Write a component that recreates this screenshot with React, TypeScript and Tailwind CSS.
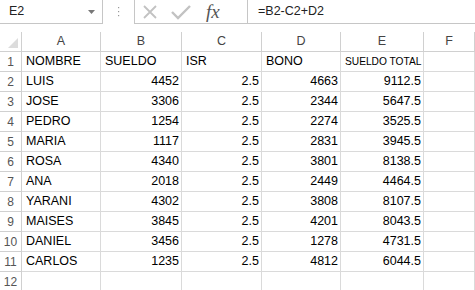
import React from "react";

const rows: [string, string, string, string, string][] = [
  ["LUIS", "4452", "2.5", "4663", "9112.5"],
  ["JOSE", "3306", "2.5", "2344", "5647.5"],
  ["PEDRO", "1254", "2.5", "2274", "3525.5"],
  ["MARIA", "1117", "2.5", "2831", "3945.5"],
  ["ROSA", "4340", "2.5", "3801", "8138.5"],
  ["ANA", "2018", "2.5", "2449", "4464.5"],
  ["YARANI", "4302", "2.5", "3808", "8107.5"],
  ["MAISES", "3845", "2.5", "4201", "8043.5"],
  ["DANIEL", "3456", "2.5", "1278", "4731.5"],
  ["CARLOS", "1235", "2.5", "4812", "6044.5"],
];

const cell = "h-[20px] border-r border-b border-[#dadada] flex items-center overflow-hidden whitespace-nowrap";
const hdr = "h-[20px] border-r border-b border-[#d0d0d0] flex items-center justify-center text-[#444] text-[12.5px]";
const rowHdr = "h-[20px] border-r border-b border-[#d0d0d0] flex items-center justify-center text-[#555] text-[12px]";

export default function App() {
  return (
    <div
      className="w-[475px] h-[290px] bg-white overflow-hidden text-[12.5px] text-black"
      style={{ fontFamily: '"Liberation Sans", Arial, sans-serif' }}
    >
      {/* formula bar */}
      <div className="h-[24px] flex">
        <div className="w-[103px] h-[24px] border-r border-b border-[#c6c6c6] flex items-center justify-between pl-[9px] pr-[7px]">
          <span className="text-[12.5px] text-[#222]">E2</span>
          <svg width="7" height="4" viewBox="0 0 7 4">
            <path d="M0 0 L7 0 L3.5 4 Z" fill="#777" />
          </svg>
        </div>
        <div className="w-[31px] flex items-center justify-center">
          <svg width="3" height="12" viewBox="0 0 3 12">
            <rect x="1" y="1" width="1.2" height="1.2" fill="#999" />
            <rect x="1" y="5" width="1.2" height="1.2" fill="#999" />
            <rect x="1" y="9" width="1.2" height="1.2" fill="#999" />
          </svg>
        </div>
        <div className="w-[113px] h-[24px] border-l border-b border-[#c6c6c6] flex items-center">
          <svg className="ml-[7px]" width="16" height="16" viewBox="0 0 16 16">
            <path d="M2 2 L14 14 M14 2 L2 14" stroke="#c2c2c2" strokeWidth="1.8" fill="none" />
          </svg>
          <svg className="ml-[13px]" width="20" height="16" viewBox="0 0 20 16">
            <path d="M1 8 L7 14 L19 2" stroke="#c2c2c2" strokeWidth="2.4" fill="none" />
          </svg>
          <span
            className="ml-[15px] text-[19px] italic text-[#555] leading-none"
            style={{ fontFamily: '"Liberation Serif", "Times New Roman", serif' }}
          >
            fx
          </span>
        </div>
        <div className="flex-1 h-[24px] border-l border-b border-[#c6c6c6] flex items-center pl-[10px] text-[12.5px] text-[#222]">
          =B2-C2+D2
        </div>
      </div>
      <div className="h-[8px]" />
      {/* grid */}
      <div className="grid grid-cols-[22px_79px_81px_80px_79px_83px_1fr]">
        <div className="h-[20px] border-r border-b border-[#d0d0d0] relative">
          <svg className="absolute right-[3px] bottom-[3px]" width="10" height="10" viewBox="0 0 10 10">
            <path d="M10 0 L10 10 L0 10 Z" fill="#dcdcdc" />
          </svg>
        </div>
        {["A", "B", "C", "D", "E", "F"].map((c) => (
          <div key={c} className={hdr}>
            {c}
          </div>
        ))}
        <div className={rowHdr}>1</div>
        <div className={`${cell} pl-[4px]`}>NOMBRE</div>
        <div className={`${cell} pl-[4px]`}>SUELDO</div>
        <div className={`${cell} pl-[4px]`}>ISR</div>
        <div className={`${cell} pl-[4px]`}>BONO</div>
        <div className={`${cell} pl-[4px] text-[10.2px]`}>SUELDO TOTAL</div>
        <div className={cell} />
        {rows.map((r, i) => (
          <React.Fragment key={i}>
            <div className={rowHdr}>{i + 2}</div>
            <div className={`${cell} pl-[4px]`}>{r[0]}</div>
            <div className={`${cell} justify-end pr-[2px]`}>{r[1]}</div>
            <div className={`${cell} justify-end pr-[2px]`}>{r[2]}</div>
            <div className={`${cell} justify-end pr-[2px]`}>{r[3]}</div>
            <div className={`${cell} justify-end pr-[2px]`}>{r[4]}</div>
            <div className={cell} />
          </React.Fragment>
        ))}
        <div className={rowHdr}>12</div>
        <div className={cell} />
        <div className={cell} />
        <div className={cell} />
        <div className={cell} />
        <div className={cell} />
        <div className={cell} />
      </div>
    </div>
  );
}
